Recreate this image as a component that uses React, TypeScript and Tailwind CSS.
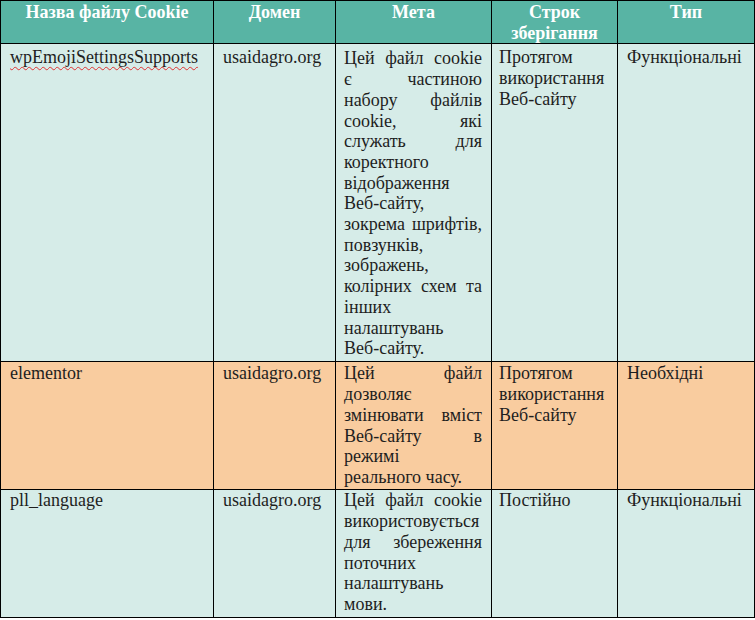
import React from "react";

type Line = { t: string; j?: boolean };

const meta1: Line[] = [
  { t: "Цей файл cookie", j: true },
  { t: "є частиною", j: true },
  { t: "набору файлів", j: true },
  { t: "cookie, які", j: true },
  { t: "служать для", j: true },
  { t: "коректного" },
  { t: "відображення" },
  { t: "Веб-сайту," },
  { t: "зокрема шрифтів,", j: true },
  { t: "повзунків," },
  { t: "зображень," },
  { t: "колірних схем та", j: true },
  { t: "інших" },
  { t: "налаштувань" },
  { t: "Веб-сайту." },
];

const meta2: Line[] = [
  { t: "Цей файл", j: true },
  { t: "дозволяє" },
  { t: "змінювати вміст", j: true },
  { t: "Веб-сайту в", j: true },
  { t: "режимі" },
  { t: "реального часу." },
];

const meta3: Line[] = [
  { t: "Цей файл cookie", j: true },
  { t: "використовується", j: true },
  { t: "для збереження", j: true },
  { t: "поточних" },
  { t: "налаштувань" },
  { t: "мови." },
];

function Lines({ lines }: { lines: Line[] }) {
  return (
    <>
      {lines.map((l, i) => (
        <div
          key={i}
          className={l.j ? "whitespace-nowrap text-justify [text-align-last:justify]" : "whitespace-nowrap"}
        >
          {l.t}
        </div>
      ))}
    </>
  );
}

const cell = "border border-black align-top px-[9px] text-left";
const head = "border border-black align-top pt-[1px] text-center font-bold text-white";

export default function App() {
  return (
    <div className="w-[755px] h-[620px] bg-white font-['Liberation_Serif',serif]">
      <table className="table-fixed border-collapse w-[754px] text-[18px] leading-[20.7px] text-[#1e1e1e]">
        <colgroup>
          <col className="w-[213px]" />
          <col className="w-[122px]" />
          <col className="w-[156px]" />
          <col className="w-[126px]" />
          <col className="w-[137px]" />
        </colgroup>
        <thead>
          <tr className="h-[43px] bg-[#58b4a4]">
            <th className={head}>Назва файлу Cookie</th>
            <th className={head}>Домен</th>
            <th className={head}>Мета</th>
            <th className={head}>
              Строк
              <br />
              зберігання
            </th>
            <th className={head}>Тип</th>
          </tr>
        </thead>
        <tbody>
          <tr className="h-[318px] bg-[#d6ece8]">
            <td className={cell + " pt-[3px]"}>
              <span className="underline decoration-wavy decoration-[#e03030] decoration-1 underline-offset-[3px]">
                wpEmojiSettingsSupports
              </span>
            </td>
            <td className={cell + " pt-[3px]"}>usaidagro.org</td>
            <td className={cell + " pt-[4px] pr-[9px] pl-[8px]"}>
              <Lines lines={meta1} />
            </td>
            <td className={cell + " pt-[3px] pl-[7px]"}>
              Протягом
              <br />
              використання
              <br />
              Веб-сайту
            </td>
            <td className={cell + " pt-[3px]"}>Функціональні</td>
          </tr>
          <tr className="h-[128px] bg-[#f9cc9f]">
            <td className={cell + " pt-[1px]"}>elementor</td>
            <td className={cell + " pt-[1px]"}>usaidagro.org</td>
            <td className={cell + " pt-[1px] pr-[9px] pl-[8px]"}>
              <Lines lines={meta2} />
            </td>
            <td className={cell + " pt-[1px] pl-[7px]"}>
              Протягом
              <br />
              використання
              <br />
              Веб-сайту
            </td>
            <td className={cell + " pt-[1px]"}>Необхідні</td>
          </tr>
          <tr className="h-[128px] bg-[#d6ece8]">
            <td className={cell + " pt-0"}>pll_language</td>
            <td className={cell + " pt-0"}>usaidagro.org</td>
            <td className={cell + " pt-0 pr-[9px] pl-[8px]"}>
              <Lines lines={meta3} />
            </td>
            <td className={cell + " pt-0 pl-[7px]"}>Постійно</td>
            <td className={cell + " pt-0"}>Функціональні</td>
          </tr>
        </tbody>
      </table>
    </div>
  );
}
